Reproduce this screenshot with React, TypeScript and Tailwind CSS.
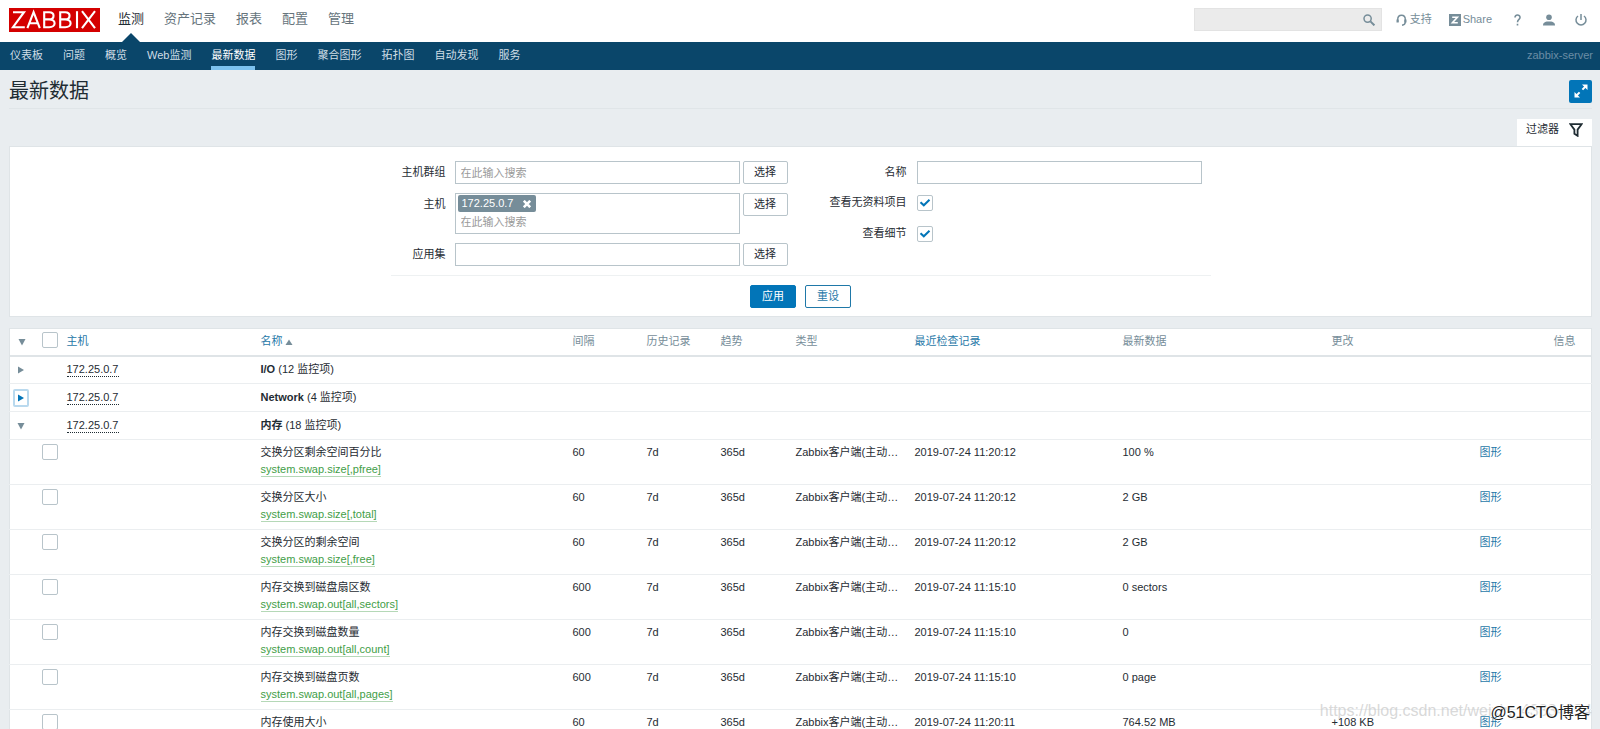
import { useState } from "react";

const NAV = ["监测", "资产记录", "报表", "配置", "管理"];
const SUBNAV = ["仪表板", "问题", "概览", "Web监测", "最新数据", "图形", "聚合图形", "拓扑图", "自动发现", "服务"];

const GROUPS = [
  { name: "I/O", count: 12, open: false, focused: false },
  { name: "Network", count: 4, open: false, focused: true },
  { name: "内存", count: 18, open: true, focused: false },
];

const ITEMS = [
  { name: "交换分区剩余空间百分比", key: "system.swap.size[,pfree]", interval: "60", time: "2019-07-24 11:20:12", value: "100 %", change: "" },
  { name: "交换分区大小", key: "system.swap.size[,total]", interval: "60", time: "2019-07-24 11:20:12", value: "2 GB", change: "" },
  { name: "交换分区的剩余空间", key: "system.swap.size[,free]", interval: "60", time: "2019-07-24 11:20:12", value: "2 GB", change: "" },
  { name: "内存交换到磁盘扇区数", key: "system.swap.out[all,sectors]", interval: "600", time: "2019-07-24 11:15:10", value: "0 sectors", change: "" },
  { name: "内存交换到磁盘数量", key: "system.swap.out[all,count]", interval: "600", time: "2019-07-24 11:15:10", value: "0", change: "" },
  { name: "内存交换到磁盘页数", key: "system.swap.out[all,pages]", interval: "600", time: "2019-07-24 11:15:10", value: "0 page", change: "" },
  { name: "内存使用大小", key: "vm.memory.size[used]", interval: "60", time: "2019-07-24 11:20:11", value: "764.52 MB", change: "+108 KB" },
];

const LINK = "text-[#1f78a8]";
const FIELD = "border border-[#b8c4ca] bg-white px-[5px] outline-none placeholder:text-[#9a9a9a]";

function Check({ label, id, defaultChecked = false }: { label?: string; id?: string; defaultChecked?: boolean }) {
  const [on, setOn] = useState(defaultChecked);
  return (
    <span className="relative block size-4">
      <input
        id={id}
        type="checkbox"
        aria-label={label}
        checked={on}
        onChange={() => setOn(!on)}
        className="block size-4 appearance-none rounded-[2px] border border-[#b8c4ca] bg-white"
      />
      {on && (
        <svg viewBox="0 0 16 16" className="pointer-events-none absolute inset-0 size-4" fill="none" stroke="#0275b8" strokeWidth="2">
          <path d="M3.5 7.2 6.8 10.3 12.5 4.8" />
        </svg>
      )}
    </span>
  );
}

function Arrow({ open, active = false }: { open: boolean; active?: boolean }) {
  return (
    <svg viewBox="0 0 8 8" className="size-2" fill={active ? "#0275b8" : "#768d99"}>
      <path d={open ? "M0.5 1H7.5L4 7.5Z" : "M1 0.5V7.5L7 4Z"} />
    </svg>
  );
}

function PickButton() {
  return (
    <button type="button" className="h-[23px] w-[45px] shrink-0 rounded-[2px] border border-[#b8c4ca] bg-white">
      选择
    </button>
  );
}

function Header() {
  return (
    <header>
      <div className="flex h-[42px] items-start bg-white pr-[13px] pl-[9px]">
        <a href="#home" aria-label="ZABBIX" className="mt-2 mr-[18px] block h-6 w-[91px] bg-[#d40000]">
          <svg viewBox="0 0 91 24" className="h-6 w-[91px]" fill="none" stroke="#fff" strokeWidth="2.1">
            <path d="M4 4.2H15L4 19.2H15.8" />
            <path d="M18.4 20.2 24.6 4.2 30.8 20.2M20.6 15.2H28.6" />
            <path d="M35.2 4.2H40.2C46 4.2 46 11.4 40.2 11.4H35.2M40.2 11.4C47.4 11.4 47.4 19.2 40.2 19.2H35.2V3.2" />
            <path d="M51.2 4.2H56.2C62 4.2 62 11.4 56.2 11.4H51.2M56.2 11.4C63.4 11.4 63.4 19.2 56.2 19.2H51.2V3.2" />
            <path d="M68 3.2V20.2" />
            <path d="M73 3.2 86 20.2M86 3.2 73 20.2" />
          </svg>
        </a>
        <nav className="flex h-full gap-5 text-[13px]">
          {NAV.map((n, i) => (
            <a key={n} href="#nav" className={i === 0 ? "relative flex items-center pb-1 text-[#1f2c33]" : "flex items-center pb-1 text-[#66747c]"}>
              {n}
              {i === 0 && (
                <svg viewBox="0 0 18 9" className="absolute bottom-0 left-1/2 h-[9px] w-[18px] -translate-x-1/2" fill="#0a466a">
                  <path d="M0 9 9 0 18 9Z" />
                </svg>
              )}
            </a>
          ))}
        </nav>
        <div className="mt-2 ml-auto flex items-center text-[11px] text-[#768d99]">
          <div className="flex h-[23px] w-[188px] items-center border border-[#e3e3e3] bg-[#ebebeb]">
            <input aria-label="搜索" className="min-w-0 flex-1 bg-transparent px-1 outline-none" />
            <button type="button" aria-label="搜索" className="mr-[6px]">
              <svg viewBox="0 0 12 12" className="size-3" fill="none" stroke="#768d99">
                <circle cx="4.6" cy="4.6" r="3.6" strokeWidth="1.5" />
                <path d="M7.4 7.4 11.4 11.4" strokeWidth="2" />
              </svg>
            </button>
          </div>
          <a href="#support" className="ml-[14px] flex items-center gap-[3px]">
            <svg viewBox="0 0 11 12" className="h-3 w-[11px]" fill="none" stroke="#768d99" strokeWidth="1.4">
              <path d="M1.7 8V5.4C1.7 -0.2 9.3 -0.2 9.3 5.4V8C9.3 10 8 11 6 11.2" />
              <path d="M1.6 5.4V8.6M9.4 5.4V8.6" strokeWidth="2.2" />
            </svg>
            支持
          </a>
          <a href="#share" className="ml-[17px] flex items-center gap-[2px]">
            <svg viewBox="0 0 12 12" className="size-3">
              <rect width="12" height="12" fill="#768d99" />
              <path d="M3.2 3.2H8.4L3.4 8.8H8.8" fill="none" stroke="#fff" strokeWidth="1.6" />
            </svg>
            Share
          </a>
          <a href="#help" aria-label="帮助" className="ml-[22px]">
            <svg viewBox="0 0 7 12" className="h-3 w-[7px]" fill="none" stroke="#768d99" strokeWidth="1.6">
              <path d="M1 3.6C1 0.2 6 0.2 6 3.4C6 5.4 3.5 5.4 3.5 8.2M3.5 9.8V11.6" />
            </svg>
          </a>
          <a href="#profile" aria-label="用户" className="ml-[22px]">
            <svg viewBox="0 0 12 12" className="size-3" fill="#768d99">
              <circle cx="6" cy="3.2" r="2.8" />
              <path d="M0 11.5C0 8 3 7.6 6 7.6S12 8 12 11.5Z" />
            </svg>
          </a>
          <a href="#logout" aria-label="退出" className="ml-5">
            <svg viewBox="0 0 12 12" className="size-3" fill="none" stroke="#768d99" strokeWidth="1.5">
              <path d="M3 2A5 5 0 1 0 9 2M6 0V6" />
            </svg>
          </a>
        </div>
      </div>
      <div className="flex h-7 items-stretch bg-[#0a466a] pr-[7px] pl-[10px] text-[11px]">
        <nav className="flex gap-5">
          {SUBNAV.map((n) => (
            <a
              key={n}
              href="#sub"
              className={
                n === "最新数据"
                  ? "flex items-center border-b-4 border-[#7cc2ee] pt-[2px] text-white"
                  : "flex items-center pb-[2px] text-[#cfdde6]"
              }
            >
              {n}
            </a>
          ))}
        </nav>
        <span className="ml-auto self-center pb-[2px] text-[#6b8da5]">zabbix-server</span>
      </div>
    </header>
  );
}

function Filter() {
  return (
    <section>
      <div className="flex justify-end">
        <button type="button" className="flex h-[27px] items-center gap-[10px] bg-white px-[9px] pb-[6px]">
          过滤器
          <svg viewBox="0 0 14 14" className="size-[14px]" fill="none" stroke="#1f2c33" strokeWidth="1.8">
            <path d="M1.4 1.2H12.6L8.6 6.6V12.8L5.4 10.8V6.6Z" />
          </svg>
        </button>
      </div>
      <form className="border border-[#dfe4e7] bg-white pt-[14px] pb-2" onSubmit={(e) => e.preventDefault()}>
        <div className="mx-auto w-[820px] max-w-full">
          <div className="flex border-b border-[#eef1f2] pb-[9px]">
            <div className="flex w-[398px] flex-col gap-[9px]">
              <div className="flex items-start gap-[3px]">
                <label htmlFor="groups" className="w-[55px] text-right leading-[22px]">主机群组</label>
                <input id="groups" placeholder="在此输入搜索" className={`${FIELD} ml-[6px] h-[23px] w-[285px]`} />
                <PickButton />
              </div>
              <div className="flex items-start gap-[3px]">
                <label htmlFor="hosts" className="w-[55px] text-right leading-[22px]">主机</label>
                <div className="ml-[6px] h-[41px] w-[285px] border border-[#b8c4ca] bg-white p-px">
                  <span className="ml-px flex h-[17px] w-[78px] items-center justify-between rounded-[2px] bg-[#768d99] px-1 text-white">
                    172.25.0.7
                    <button type="button" aria-label="移除" className="mr-px">
                      <svg viewBox="0 0 8 8" className="size-2" stroke="#fff" strokeWidth="2.6">
                        <path d="M0.8 0.8 7.2 7.2M7.2 0.8 0.8 7.2" />
                      </svg>
                    </button>
                  </span>
                  <input id="hosts" placeholder="在此输入搜索" className="block h-5 w-full px-1 outline-none placeholder:text-[#9a9a9a]" />
                </div>
                <PickButton />
              </div>
              <div className="flex items-start gap-[3px]">
                <label htmlFor="app" className="w-[55px] text-right leading-[22px]">应用集</label>
                <input id="app" className={`${FIELD} ml-[6px] h-[23px] w-[285px]`} />
                <PickButton />
              </div>
            </div>
            <div className="flex flex-1 flex-col gap-2">
              <div className="flex items-start gap-[10px]">
                <label htmlFor="name" className="w-[118px] text-right leading-[22px]">名称</label>
                <input id="name" className={`${FIELD} h-[23px] w-[285px]`} />
              </div>
              <div className="flex h-[23px] items-center gap-[10px] pb-[2px]">
                <label htmlFor="empty" className="w-[118px] text-right">查看无资料项目</label>
                <Check id="empty" defaultChecked />
              </div>
              <div className="flex h-[23px] items-center gap-[10px] pb-[2px]">
                <label htmlFor="details" className="w-[118px] text-right">查看细节</label>
                <Check id="details" defaultChecked />
              </div>
            </div>
          </div>
          <div className="flex justify-center gap-[9px] pt-[9px]">
            <button type="submit" className="h-[23px] w-[46px] rounded-[2px] border border-[#0275b8] bg-[#0275b8] text-white">应用</button>
            <button type="reset" className="h-[23px] w-[46px] rounded-[2px] border border-[#1f78a8] bg-white text-[#1f78a8]">重设</button>
          </div>
        </div>
      </form>
    </section>
  );
}

const CELL = "px-[5px] py-1";

function DataTable() {
  return (
    <table className="mt-[11px] w-full table-fixed border-collapse border-x border-t border-[#dfe4e7] bg-white text-left leading-[17px]">
      <colgroup>
        <col className="w-[27px]" />
        <col className="w-[25px]" />
        <col className="w-[194px]" />
        <col className="w-[312px]" />
        <col className="w-[74px]" />
        <col className="w-[74px]" />
        <col className="w-[75px]" />
        <col className="w-[119px]" />
        <col className="w-[208px]" />
        <col className="w-[209px]" />
        <col className="w-[148px]" />
        <col className="w-[74px]" />
        <col className="w-[43px]" />
      </colgroup>
      <thead>
        <tr className="h-[27px] border-b-2 border-[#dfe4e7] text-[#768d99] [&>th]:px-[5px] [&>th]:font-normal">
          <th>
            <button type="button" aria-label="全部展开" className="ml-[3px] block">
              <Arrow open />
            </button>
          </th>
          <th>
            <div className="pb-1">
              <Check label="全选" />
            </div>
          </th>
          <th><a href="#host" className={LINK}>主机</a></th>
          <th>
            <a href="#name" className={`${LINK} inline-flex items-center gap-[2px]`}>
              名称
              <svg viewBox="0 0 8 8" className="size-2" fill="#768d99">
                <path d="M0.5 7H7.5L4 1.5Z" />
              </svg>
            </a>
          </th>
          <th>间隔</th>
          <th>历史记录</th>
          <th>趋势</th>
          <th>类型</th>
          <th><a href="#last" className={LINK}>最近检查记录</a></th>
          <th>最新数据</th>
          <th>更改</th>
          <th />
          <th>信息</th>
        </tr>
      </thead>
      <tbody>
        {GROUPS.map((g) => (
          <tr key={g.name} className="h-7 border-b border-[#ebeef0]">
            <td>
              <button
                type="button"
                aria-label={g.name}
                className={
                  g.focused
                    ? "ml-[3px] flex h-[18px] w-4 items-center justify-center rounded-[2px] border-2 border-[#b9d9ee]"
                    : "ml-[3px] flex h-[18px] w-4 items-center justify-center"
                }
              >
                <Arrow open={g.open} active={g.focused} />
              </button>
            </td>
            <td />
            <td className="px-[5px]">
              <a href="#host" className="inline-block border-b border-dotted border-[#1f2c33] leading-[14px]">172.25.0.7</a>
            </td>
            <td className="px-[5px]" colSpan={10}>
              <b>{g.name}</b> ({g.count} 监控项)
            </td>
          </tr>
        ))}
        {ITEMS.map((it) => (
          <tr key={it.name} className="h-[45px] border-b border-[#ebeef0] align-top">
            <td />
            <td className="px-[5px] py-1">
              <Check label={it.name} />
            </td>
            <td />
            <td className={CELL}>
              {it.name}
              <br />
              <a href="#key" className="inline-block border-b border-[#b5d8b7] leading-[14px] text-[#429e47]">{it.key}</a>
            </td>
            <td className={CELL}>{it.interval}</td>
            <td className={CELL}>7d</td>
            <td className={CELL}>365d</td>
            <td className={`${CELL} whitespace-nowrap`}>Zabbix客户端(主动…</td>
            <td className={CELL}>{it.time}</td>
            <td className={CELL}>{it.value}</td>
            <td className={CELL}>{it.change}</td>
            <td className={CELL}><a href="#graph" className={LINK}>图形</a></td>
            <td />
          </tr>
        ))}
      </tbody>
    </table>
  );
}

export default function App() {
  return (
    <div className="relative h-screen overflow-hidden bg-[#e9edf0] font-['Liberation_Sans','Noto_Sans_CJK_SC',sans-serif] text-[11px] text-[#1f2c33]">
      <Header />
      <main className="pr-2 pl-[9px]">
        <div className="mb-[10px] flex h-[39px] items-center justify-between border-b border-[#e0e5e8] pt-1">
          <h1 className="text-xl">最新数据</h1>
          <button type="button" aria-label="全屏" className="flex size-[23px] items-center justify-center rounded-[2px] bg-[#0275b8]">
            <svg viewBox="0 0 14 14" className="size-[14px]" fill="#fff" stroke="#fff">
              <path d="M8 0.5H13.5V6ZM0.5 8V13.5H6Z" stroke="none" />
              <path d="M8.4 5.6 11.5 2.5M2.5 11.5 5.6 8.4" strokeWidth="2" />
            </svg>
          </button>
        </div>
        <Filter />
        <DataTable />
      </main>
      <div className="pointer-events-none absolute right-2 bottom-[6px] text-base text-[#c8c8c8]/70">https://blog.csdn.net/weixin_43834154</div>
      <div className="pointer-events-none absolute right-[10px] bottom-1 text-base text-[#222] [text-shadow:1px_1px_0_#fff,-1px_-1px_0_#fff]">@51CTO博客</div>
    </div>
  );
}
